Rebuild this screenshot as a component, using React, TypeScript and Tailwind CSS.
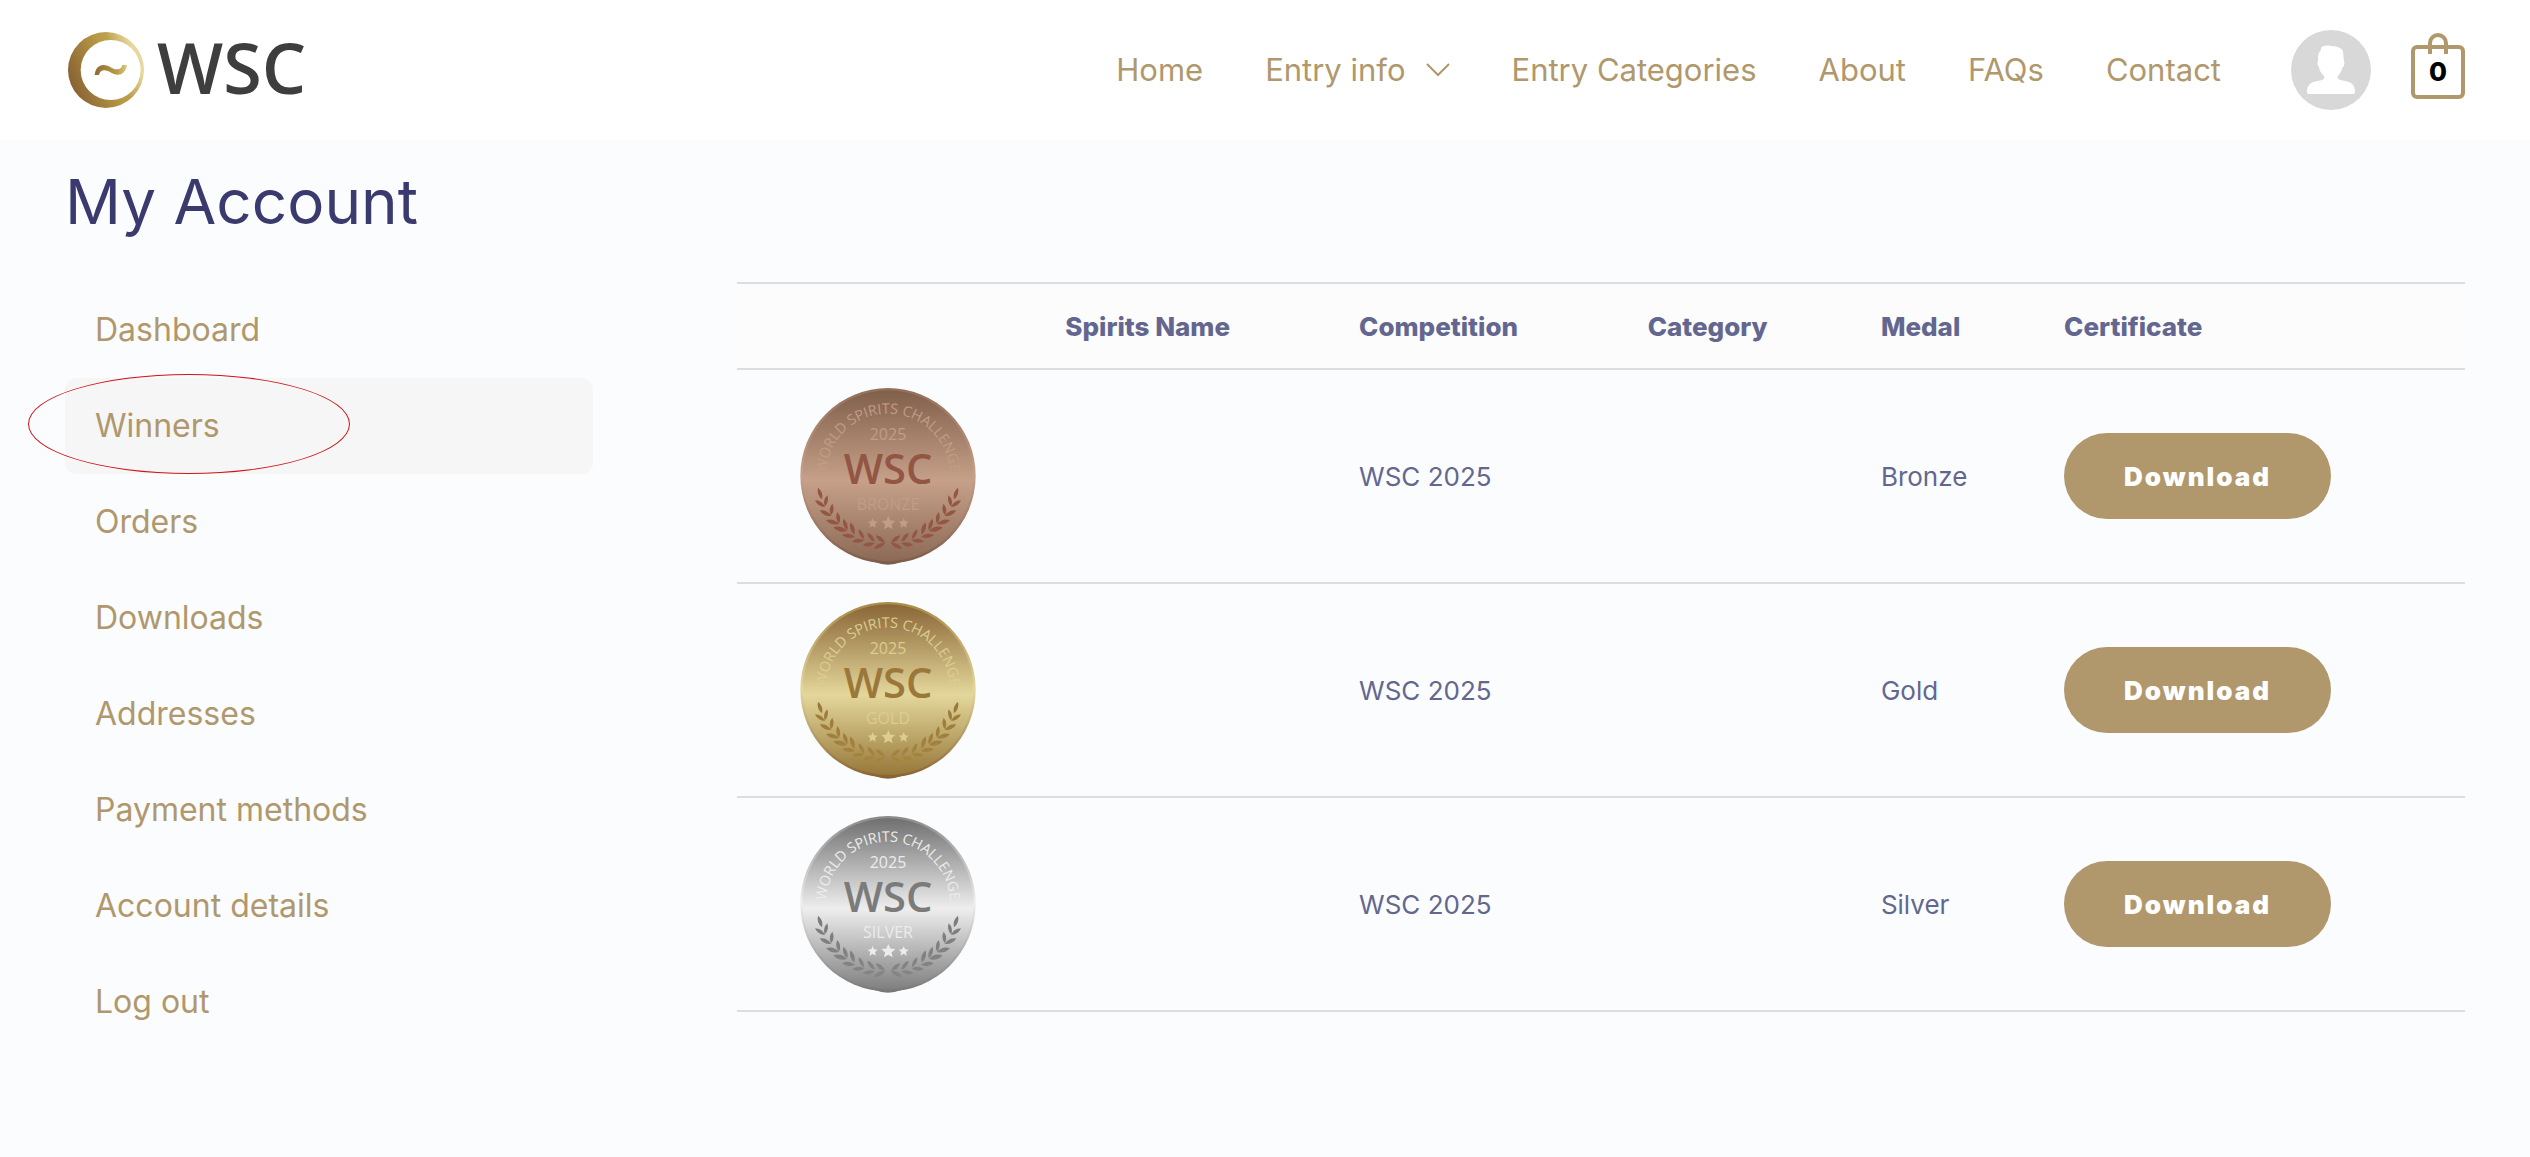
import { useId } from 'react';

type MedalTone = 'bronze' | 'gold' | 'silver';

interface Palette {
    top: string;
    shine: string;
    bottom: string;
    rimTop: string;
    rimBottom: string;
    ink: string;
    inkLow: string;
    pale: string;
}

interface Winner {
    name: string;
    competition: string;
    category: string;
    medal: string;
    tone: MedalTone;
}

const navLinks = [
    { label: 'Home' },
    { label: 'Entry info', hasMenu: true },
    { label: 'Entry Categories' },
    { label: 'About' },
    { label: 'FAQs' },
    { label: 'Contact' },
];

const accountLinks = [
    'Dashboard',
    'Winners',
    'Orders',
    'Downloads',
    'Addresses',
    'Payment methods',
    'Account details',
    'Log out',
];

const tableHeadings = ['Spirits Name', 'Competition', 'Category', 'Medal', 'Certificate'];

const winners: Winner[] = [
    { name: '', competition: 'WSC 2025', category: '', medal: 'Bronze', tone: 'bronze' },
    { name: '', competition: 'WSC 2025', category: '', medal: 'Gold', tone: 'gold' },
    { name: '', competition: 'WSC 2025', category: '', medal: 'Silver', tone: 'silver' },
];

const palettes: Record<MedalTone, Palette> = {
    bronze: {
        top: '#80604b',
        shine: '#c6a089',
        bottom: '#8c6a56',
        rimTop: '#94705a',
        rimBottom: '#7c5c4a',
        ink: '#935544',
        inkLow: '#935544',
        pale: '#c29c84',
    },
    gold: {
        top: '#8a6637',
        shine: '#e4d79b',
        bottom: '#97783a',
        rimTop: '#a98a45',
        rimBottom: '#8a6232',
        ink: '#9b783a',
        inkLow: '#a5853f',
        pale: '#dccd90',
    },
    silver: {
        top: '#707070',
        shine: '#eeeeee',
        bottom: '#808080',
        rimTop: '#8a8a8a',
        rimBottom: '#787878',
        ink: '#7b7b7b',
        inkLow: '#858585',
        pale: '#ececec',
    },
};

// tip and base of every leaf on the left branch, the right one is mirrored
const leaves = [
    [114, 353, 126, 388],
    [105, 391, 135, 411],
    [142, 376, 134, 410],
    [119, 421, 154, 438],
    [157, 401, 153, 436],
    [138, 450, 177, 462],
    [172, 426, 177, 461],
    [160, 472, 201, 483],
    [190, 446, 202, 481],
    [186, 496, 225, 500],
    [211, 457, 223, 494],
    [216, 514, 253, 511],
    [236, 478, 252, 508],
    [248, 526, 284, 520],
    [262, 488, 284, 515],
    [281, 536, 315, 519],
    [287, 496, 315, 519],
];

const leafPath = ([x1, y1, x2, y2]: number[]) => {
    const mx = (x1 + x2) / 2;
    const my = (y1 + y2) / 2;
    const nx = (y2 - y1) * 0.32;
    const ny = (x1 - x2) * 0.32;
    return `M${x1} ${y1}Q${mx + nx} ${my + ny} ${x2} ${y2}Q${mx - nx} ${my - ny} ${x1} ${y1}Z`;
};

const starPoints = (cx: number, cy: number, r: number) =>
    Array.from({ length: 10 }, (_, i) => {
        const radius = i % 2 ? r * 0.46 : r;
        const angle = (Math.PI / 5) * i - Math.PI / 2;
        return `${cx + radius * Math.cos(angle)},${cy + radius * Math.sin(angle)}`;
    }).join(' ');

const Medal = ({ tone, label }: { tone: MedalTone; label: string }) => {
    const id = useId();
    const p = palettes[tone];
    return (
        <svg
            viewBox="60 51 528 534"
            className="block h-[178px] w-[176px]"
            fontFamily='"Open Sans", "Noto Sans", sans-serif'
            textAnchor="middle"
            role="img"
            aria-label={`${label} medal`}
        >
            <defs>
                <linearGradient id={`${id}face`} x1="0" y1="0" x2="0" y2="1">
                    <stop offset="0" stopColor={p.top} />
                    <stop offset="0.53" stopColor={p.shine} />
                    <stop offset="1" stopColor={p.bottom} />
                </linearGradient>
                <linearGradient id={`${id}rim`} x1="0" y1="0" x2="0" y2="1">
                    <stop offset="0" stopColor={p.rimTop} />
                    <stop offset="0.5" stopColor={p.shine} />
                    <stop offset="1" stopColor={p.rimBottom} />
                </linearGradient>
                <linearGradient id={`${id}leaf`} gradientUnits="userSpaceOnUse" x1="0" y1="350" x2="0" y2="540">
                    <stop offset="0" stopColor={p.ink} />
                    <stop offset="1" stopColor={p.inkLow} />
                </linearGradient>
                <path id={`${id}arc`} d="M138 377V317A186 186 0 0 1 510 317V377" />
            </defs>
            <path d="M284 576Q304 584 324 584T364 576Z" fill={p.rimBottom} />
            <circle cx="324" cy="317" r="263" fill={`url(#${id}rim)`} />
            <circle cx="324" cy="317" r="256" fill={`url(#${id}face)`} />
            <text fill={p.pale} fontSize="43" fontWeight="400">
                <textPath href={`#${id}arc`} startOffset="50%">WORLD SPIRITS CHALLENGE</textPath>
            </text>
            <text x="324" y="210" fill={p.pale} fontSize="48">2025</text>
            <text x="324" y="343" fill={p.ink} fontSize="125" fontWeight="600">WSC</text>
            <text x="324" y="420" fill={p.pale} fontSize="48">{label.toUpperCase()}</text>
            <g fill={p.pale}>
                <polygon points={starPoints(278, 460, 16)} />
                <polygon points={starPoints(325, 460, 22)} />
                <polygon points={starPoints(371, 460, 16)} />
            </g>
            <g fill={`url(#${id}leaf)`}>
                {leaves.map((leaf, i) => (
                    <path key={i} d={leafPath(leaf)} />
                ))}
                {leaves.map(([x1, y1, x2, y2], i) => (
                    <path key={i} d={leafPath([648 - x1, y1, 648 - x2, y2])} />
                ))}
            </g>
        </svg>
    );
};

const Logo = () => (
    <a href="#" aria-label="WSC" className="flex items-start">
        <svg viewBox="-3 0 240 228" className="h-[76px] w-[80px]" aria-hidden="true">
            <defs>
                <linearGradient id="logo-ring" x1="0" y1="0.7" x2="1" y2="0.3">
                    <stop offset="0.05" stopColor="#8a6434" />
                    <stop offset="0.55" stopColor="#b89a46" />
                    <stop offset="0.65" stopColor="#bb9f4d" />
                    <stop offset="0.9" stopColor="#e6d89c" />
                </linearGradient>
                <linearGradient id="logo-wave" x1="0" y1="0" x2="1" y2="0">
                    <stop offset="0" stopColor="#8f6a36" />
                    <stop offset="0.7" stopColor="#b99c48" />
                    <stop offset="1" stopColor="#dccb88" />
                </linearGradient>
            </defs>
            <path
                fill="url(#logo-ring)"
                fillRule="evenodd"
                d="M120 0A114 114 0 1 1 120 228A114 114 0 1 1 120 0ZM134 24A90 90 0 1 0 134 204A90 90 0 1 0 134 24Z"
            />
            <path
                fill="url(#logo-wave)"
                d="M86 129C88 112 96 99 113 99C129 99 139 112 153 112C163 112 167 107 169 99H183C181 115 172 128 155 128C139 128 129 115 115 115C106 115 101 121 99 129Z"
            />
        </svg>
        <span className="ml-3 font-['Open_Sans'] text-[70px] leading-[70px] font-semibold text-[#3e3e3e]">WSC</span>
    </a>
);

const Header = () => (
    <header className="flex h-[140px] items-center justify-between bg-white px-[65px]">
        <Logo />
        <div className="flex items-center">
            <nav className="flex items-center gap-[62px] text-[31px] text-[#b0986c]">
                {navLinks.map((link) => (
                    <a key={link.label} href="#" className="flex items-center">
                        {link.label}
                        {link.hasMenu && (
                            <svg viewBox="0 0 24 14" className="ml-5 h-[14px] w-6" fill="none" stroke="currentColor" strokeWidth="2" aria-hidden="true">
                                <path d="M1 1L12 12L23 1" />
                            </svg>
                        )}
                    </a>
                ))}
            </nav>
            <a href="#" aria-label="Account" className="ml-[70px]">
                <svg viewBox="0 0 80 80" className="size-20" aria-hidden="true">
                    <circle cx="40" cy="40" r="40" fill="#d8d8d8" />
                    <path
                        fill="#fff"
                        d="M27 28C27 23 29 21 30 20L30 18C31 16 35 15 40 16C47 16 52 19 52 22L53 31C54 34 53 37 51 38C51 41 49 43 47 46C46 49 48 50 54 51C61 52 64 56 64 61C64 64 63 64 62 64H18C16 64 16 63 16 61C16 56 19 52 27 51C32 50 34 49 33 46C30 43 28 40 28 37C26 35 26 33 27 31Z"
                    />
                </svg>
            </a>
            <a href="#" aria-label="Cart" className="relative ml-10 block">
                <svg viewBox="0 0 54 75" className="h-[75px] w-[54px]" fill="none" stroke="#b0986c" strokeWidth="4" aria-hidden="true">
                    <rect x="2" y="14" width="50" height="50" rx="4" />
                    <path d="M19 21V10A8 8 0 0 1 35 10V21" />
                </svg>
                <span className="absolute inset-x-0 top-[25px] text-center text-[26px] leading-7 font-extrabold text-black">0</span>
            </a>
        </div>
    </header>
);

const AccountNav = () => (
    <nav className="w-[22%] text-[32px] text-[#b0986c]">
        <ul>
            {accountLinks.map((label) => (
                <li key={label} className="relative">
                    <a
                        href="#"
                        className={`block h-24 rounded-xl px-[30px] leading-[96px] ${label === 'Winners' ? 'bg-[#f6f6f6]' : ''}`}
                    >
                        {label}
                    </a>
                    {label === 'Winners' && (
                        <span className="pointer-events-none absolute -top-1 -left-[37px] h-[100px] w-[322px] rounded-[50%] border border-[#d01418]" />
                    )}
                </li>
            ))}
        </ul>
    </nav>
);

const WinnersTable = () => (
    <table className="w-[72%] table-fixed border-collapse text-left text-[26px] text-[#63678f]">
        <colgroup>
            <col className="w-[19%]" />
            <col className="w-[17%]" />
            <col className="w-[16.7%]" />
            <col className="w-[13.5%]" />
            <col className="w-[10.6%]" />
            <col />
        </colgroup>
        <thead>
            <tr className="h-[86px] border-y-2 border-[#dddddd] bg-[#fcfcfc]">
                <td />
                {tableHeadings.map((heading) => (
                    <th key={heading} className="font-extrabold">{heading}</th>
                ))}
            </tr>
        </thead>
        <tbody>
            {winners.map((winner) => (
                <tr key={winner.tone} className="h-[214px] border-b-2 border-[#dddddd]">
                    <td className="pl-[63px]">
                        <Medal tone={winner.tone} label={winner.medal} />
                    </td>
                    <td>{winner.name}</td>
                    <td>{winner.competition}</td>
                    <td>{winner.category}</td>
                    <td>{winner.medal}</td>
                    <td>
                        <button
                            type="button"
                            className="block h-[86px] rounded-full bg-[#b0986c] px-[60px] font-black tracking-[2px] text-white"
                        >
                            Download
                        </button>
                    </td>
                </tr>
            ))}
        </tbody>
    </table>
);

const App = () => {
    return (
        <div className="min-h-screen bg-[#fafcfe] font-['Inter',sans-serif]">
            <Header />
            <main className="px-[65px] pb-16">
                <h1 className="pt-6 text-[62px] leading-[76px] text-[#3a3a6e]">My Account</h1>
                <div className="mt-[42px] flex items-start justify-between">
                    <AccountNav />
                    <WinnersTable />
                </div>
            </main>
        </div>
    );
};

export default App;
